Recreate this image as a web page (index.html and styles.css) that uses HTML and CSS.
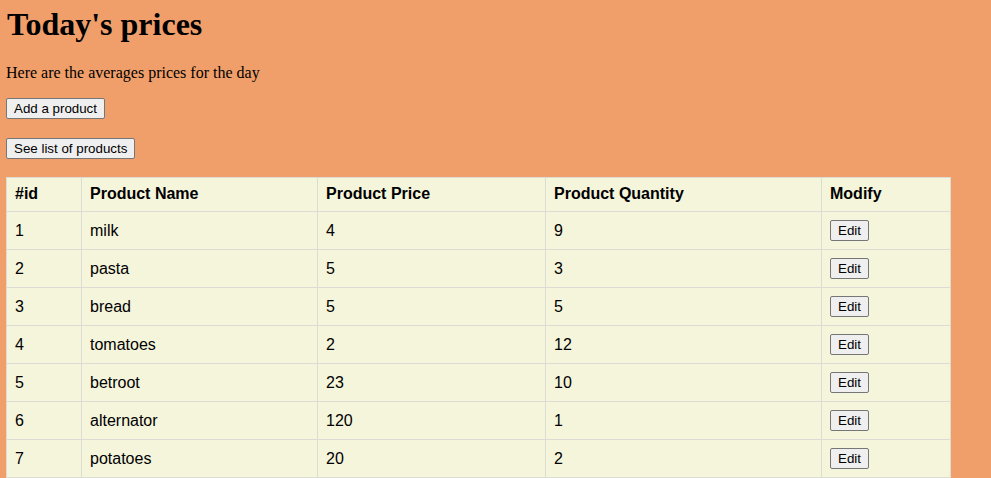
FILE: index.html
```html
<!DOCTYPE html>
<html>
<head>
<meta charset="utf-8">
<title>Today's prices</title>
<link rel="stylesheet" href="styles.css">
</head>
<body>
<h1 class="title">Today's prices</h1>
<p class="intro">Here are the averages prices for the day</p>
<div class="actions">
  <button class="btn">Add a product</button>
  <button class="btn">See list of products</button>
</div>
<table class="prices">
  <colgroup>
    <col class="c-id"><col class="c-name"><col class="c-price"><col class="c-qty"><col class="c-mod">
  </colgroup>
  <thead>
    <tr><th>#id</th><th>Product Name</th><th>Product Price</th><th>Product Quantity</th><th>Modify</th></tr>
  </thead>
  <tbody>
    <tr><td>1</td><td>milk</td><td>4</td><td>9</td><td><button class="btn">Edit</button></td></tr>
    <tr><td>2</td><td>pasta</td><td>5</td><td>3</td><td><button class="btn">Edit</button></td></tr>
    <tr><td>3</td><td>bread</td><td>5</td><td>5</td><td><button class="btn">Edit</button></td></tr>
    <tr><td>4</td><td>tomatoes</td><td>2</td><td>12</td><td><button class="btn">Edit</button></td></tr>
    <tr><td>5</td><td>betroot</td><td>23</td><td>10</td><td><button class="btn">Edit</button></td></tr>
    <tr><td>6</td><td>alternator</td><td>120</td><td>1</td><td><button class="btn">Edit</button></td></tr>
    <tr><td>7</td><td>potatoes</td><td>20</td><td>2</td><td><button class="btn">Edit</button></td></tr>
  </tbody>
</table>
</body>
</html>
```
FILE: styles.css
```css
html, body {
  margin: 0;
  padding: 0;
}
body {
  background: #f09f6b;
  font-family: "Liberation Serif", "Times New Roman", serif;
  color: #000;
  padding: 6px 6px 0 6px;
}
.title {
  font-size: 32px;
  font-weight: bold;
  margin: 0 0 0 1px;
  line-height: normal;
}
.intro {
  font-size: 16px;
  margin: 21px 0 0 0;
}
.actions {
  display: flex;
  flex-direction: column;
  align-items: flex-start;
  gap: 19px;
  margin-top: 16px;
}
.btn {
  font-family: "Liberation Sans", Arial, sans-serif;
  font-size: 13.333px;
  color: #000;
  background: #efefef;
  border: 1px solid #767676;
  border-radius: 2px;
  padding: 2px 7px;
  line-height: normal;
}
.prices {
  margin-top: 18px;
  border-collapse: collapse;
  table-layout: fixed;
  width: 944px;
  background: #f5f5dc;
  font-family: "Liberation Sans", Arial, sans-serif;
  font-size: 16px;
  border: 1px solid #d6d6d0;
}
.c-id { width: 75px; }
.c-name { width: 236px; }
.c-price { width: 228px; }
.c-qty { width: 276px; }
.c-mod { width: 129px; }
.prices th,
.prices td {
  border: 1px solid #dcdcd4;
  padding: 8px;
  text-align: left;
  vertical-align: middle;
}
.prices th {
  font-weight: bold;
  padding-top: 7px;
}
```
